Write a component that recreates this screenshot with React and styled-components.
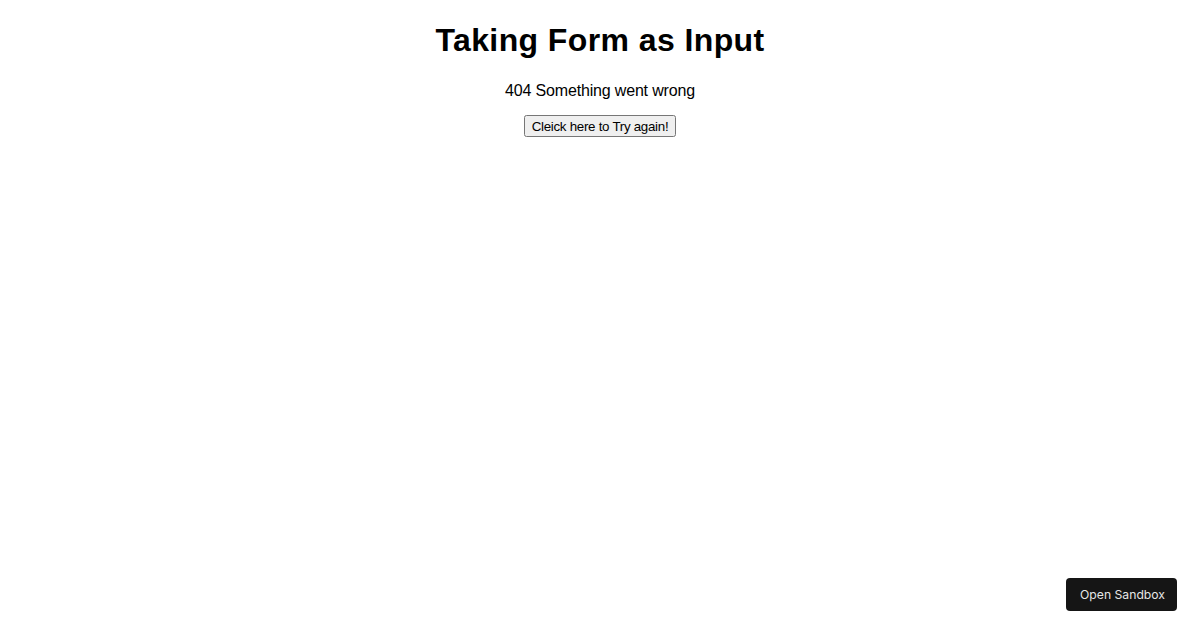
import React from "react";
import styled, { createGlobalStyle } from "styled-components";

const GlobalStyle = createGlobalStyle`
  body {
    margin: 8px;
    background: #ffffff;
    color: #000000;
    font-family: "Liberation Sans", Arial, sans-serif;
  }
`;

const Page = styled.div`
  text-align: center;
`;

const Title = styled.h1`
  font-size: 32px;
  font-weight: bold;
  letter-spacing: 0.4px;
  margin: 14px 0 22.94px;
`;

const Message = styled.p`
  font-size: 16px;
  letter-spacing: -0.17px;
  margin: 16px 0 15px;
`;

const RetryButton = styled.button`
  font-family: "Liberation Sans", Arial, sans-serif;
  font-size: 13.3333px;
  letter-spacing: -0.28px;
  padding: 2px 6px;
  height: 22px;
`;

const SandboxButton = styled.button`
  position: fixed;
  right: 23px;
  bottom: 19px;
  height: 33px;
  padding: 0 12px 0 14px;
  border: none;
  border-radius: 4px;
  background: #151515;
  color: #e6e6e6;
  font-family: Inter, "Liberation Sans", sans-serif;
  font-size: 12.2px;
  cursor: pointer;
`;

export default function App() {
  return (
    <>
      <GlobalStyle />
      <Page>
        <Title>Taking Form as Input</Title>
        <Message>404 Something went wrong</Message>
        <RetryButton>Cleick here to Try again!</RetryButton>
      </Page>
      <SandboxButton>Open Sandbox</SandboxButton>
    </>
  );
}
